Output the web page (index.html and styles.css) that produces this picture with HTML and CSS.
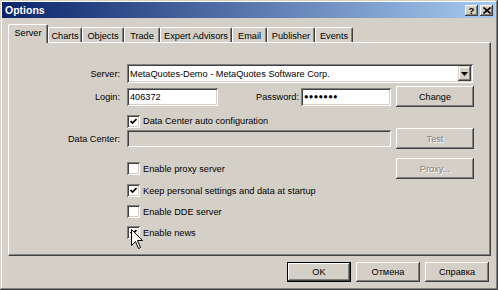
FILE: index.html
```html
<!DOCTYPE html>
<html lang="en">
<head>
  <meta charset="UTF-8">
  <title>Options</title>
  <link rel="stylesheet" href="styles.css">
</head>
<body>
  <div class="window">
    <div class="titlebar">
      <span class="title">Options</span>
      <div class="caption-btns">
        <span class="cap-btn help">?</span>
        <span class="cap-btn">
          <svg width="8" height="7" viewBox="0 0 8 7"><path d="M0.5 0.5 L7.5 6.5 M7.5 0.5 L0.5 6.5" stroke="#000" stroke-width="1.6"/></svg>
        </span>
      </div>
    </div>

    <!-- Tabs -->
    <div class="tabs">
      <div class="tab active" style="width:40px">Server</div>
      <div class="tab" style="width:34px">Charts</div>
      <div class="tab" style="width:42px">Objects</div>
      <div class="tab" style="width:36px">Trade</div>
      <div class="tab" style="width:72px">Expert Advisors</div>
      <div class="tab" style="width:35px">Email</div>
      <div class="tab" style="width:48px">Publisher</div>
      <div class="tab" style="width:38px">Events</div>
    </div>

    <!-- Server page -->
    <div class="panel">
      <div class="row row-server">
        <label class="lbl">Server:</label>
        <div class="field combo">
          <span class="combo-text">MetaQuotes-Demo - MetaQuotes Software Corp.</span>
          <span class="combo-arrow"><svg width="7" height="4" viewBox="0 0 7 4"><path d="M0 0 H7 L3.5 4 Z" fill="#000"/></svg></span>
        </div>
      </div>

      <div class="row row-login">
        <label class="lbl">Login:</label>
        <div class="field login">406372</div>
        <label class="lbl-pass">Password:</label>
        <div class="field pass">●●●●●●●</div>
        <div class="btn side-btn">Change</div>
      </div>

      <div class="row row-auto">
        <div class="indent"></div>
        <span class="check checked"><svg width="7" height="7" viewBox="0 0 7 7"><path d="M0.5 3 L2.5 5 L6.5 1" stroke="#000" stroke-width="1.7" fill="none"/></svg></span>
        <span class="check-text">Data Center auto configuration</span>
      </div>

      <div class="row row-dc">
        <label class="lbl">Data Center:</label>
        <div class="field dc disabled"></div>
        <div class="btn side-btn disabled-btn">Test</div>
      </div>

      <div class="row row-proxy">
        <div class="indent"></div>
        <span class="check"></span>
        <span class="check-text">Enable proxy server</span>
        <div class="btn side-btn disabled-btn push-right">Proxy...</div>
      </div>

      <div class="row row-check first-check">
        <div class="indent"></div>
        <span class="check checked"><svg width="7" height="7" viewBox="0 0 7 7"><path d="M0.5 3 L2.5 5 L6.5 1" stroke="#000" stroke-width="1.7" fill="none"/></svg></span>
        <span class="check-text">Keep personal settings and data at startup</span>
      </div>

      <div class="row row-check">
        <div class="indent"></div>
        <span class="check"></span>
        <span class="check-text">Enable DDE server</span>
      </div>

      <div class="row row-check">
        <div class="indent"></div>
        <span class="check checked"><svg width="7" height="7" viewBox="0 0 7 7"><path d="M0.5 3 L2.5 5 L6.5 1" stroke="#000" stroke-width="1.7" fill="none"/></svg></span>
        <span class="check-text">Enable news</span>
      </div>
    </div>

    <!-- Dialog buttons -->
    <div class="footer">
      <div class="btn dlg-btn default">OK</div>
      <div class="btn dlg-btn">Отмена</div>
      <div class="btn dlg-btn">Справка</div>
    </div>

    <svg class="cursor" width="13" height="21" viewBox="0 0 13 21">
      <path d="M0.5 0.5 V16.5 L4.5 12.5 L7.5 19.5 L9.5 18.5 L6.5 11.5 L11.5 11.5 Z" fill="#fff" stroke="#000" stroke-width="1" stroke-linejoin="miter"/>
    </svg>
  </div>
</body>
</html>
```

FILE: styles.css
```css
:root {
  --face: #d4d0c8;
  --shadow: #808080;
  --dark: #404040;
  --light: #ffffff;
}

body {
  margin: 0;
  background: var(--face);
  font-family: 'Liberation Sans', Arial, sans-serif;
  font-size: 9.2px;
  color: #000;
}

.window {
  position: relative;
  width: 498px;
  height: 290px;
  box-sizing: border-box;
  padding: 2px 3px 3px 2px;
  background: var(--face);
  box-shadow: inset -1px -1px var(--dark), inset 1px 1px var(--face),
              inset -2px -2px var(--shadow), inset 2px 2px var(--light);
}

/* title bar */
.titlebar {
  height: 16px;
  display: flex;
  align-items: center;
  justify-content: space-between;
  background: linear-gradient(90deg, #0a246a, #a6caf0);
  padding: 0 2px 0 3px;
}

.title {
  color: #fff;
  font-weight: bold;
  font-size: 10.5px;
}

.caption-btns {
  display: flex;
  gap: 2px;
}

.cap-btn {
  width: 13px;
  height: 11px;
  display: flex;
  align-items: center;
  justify-content: center;
  background: var(--face);
  box-shadow: inset -1px -1px var(--dark), inset 1px 1px var(--light),
              inset -2px -2px var(--shadow);
  font-weight: bold;
  font-size: 9.5px;
  line-height: 11px;
}

/* tabs */
.tabs {
  display: flex;
  align-items: flex-end;
  height: 18px;
  margin-top: 6px;
  padding-left: 6px;
}

.tab {
  height: 15px;
  box-sizing: border-box;
  display: flex;
  align-items: center;
  justify-content: center;
  white-space: nowrap;
  border-top: 1px solid var(--light);
  border-left: 1px solid var(--light);
  border-right: 1px solid var(--dark);
  border-radius: 2px 2px 0 0;
  box-shadow: inset -1px 0 var(--shadow);
  padding-top: 1px;
}

.tab.active {
  height: 19px;
  margin-bottom: -1px;
  position: relative;
  z-index: 1;
  background: var(--face);
  padding-bottom: 3px;
}

/* page */
.panel {
  width: 483px;
  height: 214px;
  box-sizing: border-box;
  margin-left: 6px;
  border-top: 1px solid var(--light);
  border-left: 1px solid var(--light);
  border-right: 1px solid var(--dark);
  border-bottom: 1px solid var(--dark);
  box-shadow: inset -1px -1px var(--shadow);
}

.row {
  display: flex;
  align-items: center;
}

.lbl {
  width: 111px;
  margin-right: 7px;
  text-align: right;
}

.indent {
  width: 118px;
  flex: none;
}

.field {
  height: 18px;
  box-sizing: border-box;
  background: #fff;
  display: flex;
  align-items: center;
  padding-left: 3px;
  box-shadow: inset 1px 1px var(--shadow), inset -1px -1px var(--light),
              inset 2px 2px var(--dark), inset -2px -2px var(--face);
}

.field.disabled {
  background: var(--face);
}

.row-server {
  margin-top: 21px;
  height: 19px;
}

.combo {
  width: 346px;
  height: 19px;
  justify-content: space-between;
  padding-right: 2px;
}

.combo-arrow {
  width: 13px;
  height: 15px;
  display: flex;
  align-items: center;
  justify-content: center;
  background: var(--face);
  box-shadow: inset -1px -1px var(--dark), inset 1px 1px var(--face),
              inset -2px -2px var(--shadow), inset 2px 2px var(--light);
}

.row-login {
  margin-top: 3px;
  height: 21px;
}

.login {
  width: 91px;
}

.lbl-pass {
  width: 81px;
  margin-right: 2px;
  text-align: right;
}

.pass {
  width: 90px;
  font-size: 7.5px;
  letter-spacing: 0.3px;
}

.btn {
  height: 21px;
  box-sizing: border-box;
  display: flex;
  align-items: center;
  justify-content: center;
  background: var(--face);
  box-shadow: inset -1px -1px var(--dark), inset 1px 1px var(--light),
              inset -2px -2px var(--shadow), inset 2px 2px var(--face);
}

.side-btn {
  width: 78px;
  margin-left: 5px;
}

.disabled-btn {
  color: var(--shadow);
  text-shadow: 1px 1px var(--light);
}

.side-btn.push-right {
  margin-left: auto;
  margin-right: 16px;
}

.row-auto {
  margin-top: 7px;
  height: 14px;
}

.row-dc {
  margin-top: 0;
  height: 21px;
}

.dc {
  width: 264px;
  height: 17px;
}

.row-proxy {
  margin-top: 9px;
  height: 21px;
}

.row-check {
  height: 21px;
}

.first-check {
  margin-top: 1px;
}

.check {
  width: 13px;
  height: 13px;
  flex: none;
  box-sizing: border-box;
  background: #fff;
  display: flex;
  align-items: center;
  justify-content: center;
  box-shadow: inset 1px 1px var(--shadow), inset -1px -1px var(--light),
              inset 2px 2px var(--dark), inset -2px -2px var(--face);
}

.check-text {
  margin-left: 3px;
  white-space: nowrap;
}

/* dialog buttons */
.footer {
  width: 483px;
  margin-left: 6px;
  margin-top: 6px;
  display: flex;
  justify-content: flex-end;
  gap: 5px;
  padding-right: 2px;
  box-sizing: border-box;
}

.dlg-btn {
  width: 64px;
  height: 20px;
}

.dlg-btn.default {
  box-shadow: inset 0 0 0 1px #000, inset -2px -2px var(--dark),
              inset 2px 2px var(--light), inset -3px -3px var(--shadow);
}

.cursor {
  position: absolute;
  left: 131px;
  top: 229px;
}
```
